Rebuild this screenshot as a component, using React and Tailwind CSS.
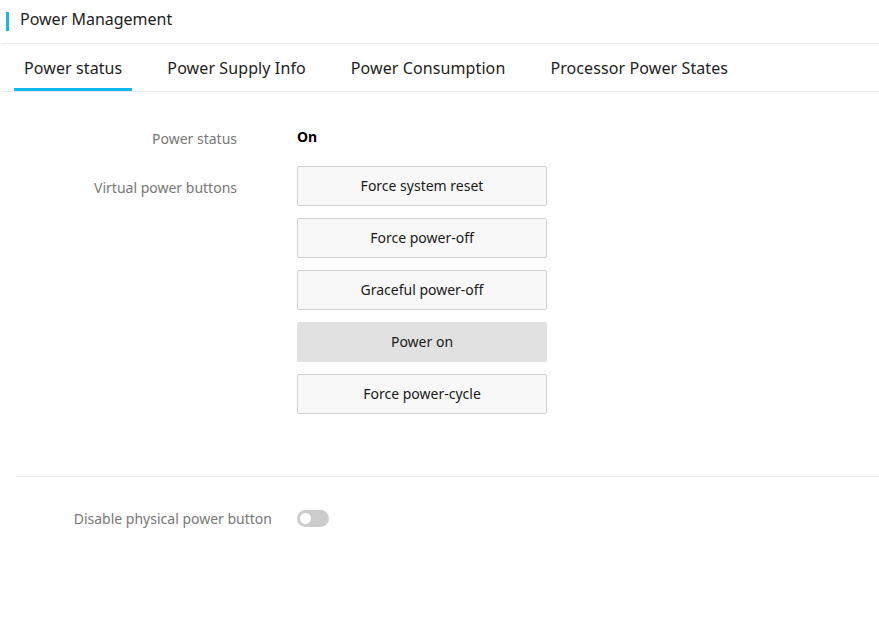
import { useState } from "react";

const tabs = ["Power status", "Power Supply Info", "Power Consumption", "Processor Power States"];
const buttons = ["Force system reset", "Force power-off", "Graceful power-off", "Power on", "Force power-cycle"];

export default function App() {
  const [active, setActive] = useState(0);
  const [disabled, setDisabled] = useState(false);

  return (
    <div
      className="w-[879px] h-[618px] bg-white text-[#222]"
      style={{ fontFamily: '"Noto Sans", "Open Sans", sans-serif' }}
    >
      {/* header */}
      <div className="h-[44px] ml-[2px] border-b border-[#ebebf0] flex items-center">
        <div className="ml-[4px] w-[3px] h-[19px] bg-[#12b8f2]" />
        <span className="ml-[11px] text-[16px] leading-none -mt-[6px]">Power Management</span>
      </div>

      {/* tabs */}
      <div className="ml-[2px] h-[48px] border-b border-[#ebebf0] flex gap-[25px] pl-[12px]">
        {tabs.map((t, i) => (
          <button
            key={t}
            onClick={() => setActive(i)}
            className={
              "px-[10px] text-[16px] tracking-[0.1px] h-full pt-[4px] border-b-[3px] " +
              (i === active ? "border-[#12b8f2]" : "border-transparent")
            }
          >
            {t}
          </button>
        ))}
      </div>

      {/* content */}
      <div className="pt-[36px]">
        <div className="flex items-center h-[20px]">
          <div className="w-[237px] text-right text-[14px] text-[#777]">Power status</div>
          <div className="ml-[60px] text-[14px] font-bold text-black -mt-[4px]">On</div>
        </div>

        <div className="flex mt-[18px]">
          <div className="w-[237px] text-right text-[14px] text-[#777] pt-[11px]">Virtual power buttons</div>
          <div className="ml-[60px] flex flex-col gap-[12px]">
            {buttons.map((b) => (
              <button
                key={b}
                className={
                  "w-[250px] h-[40px] pb-[2px] rounded-[2px] text-[14px] text-[#1a1a1a] " +
                  (b === "Power on"
                    ? "bg-[#e1e1e1]"
                    : "bg-[#f8f8f8] border border-[#cfcfd6]")
                }
              >
                {b}
              </button>
            ))}
          </div>
        </div>

        <div className="ml-[16px] mt-[62px] border-t border-[#ebebf0]" />

        <div className="flex items-center mt-[31px]">
          <div className="w-[272px] text-right text-[14px] text-[#777]">Disable physical power button</div>
          <button
            onClick={() => setDisabled(!disabled)}
            className={
              "ml-[25px] w-[32px] h-[17px] rounded-full relative " +
              (disabled ? "bg-[#12b8f2]" : "bg-[#cccccc]")
            }
          >
            <span
              className={
                "absolute top-[3px] w-[11px] h-[11px] rounded-full bg-white " +
                (disabled ? "left-[18px]" : "left-[3px]")
              }
            />
          </button>
        </div>
      </div>
    </div>
  );
}
